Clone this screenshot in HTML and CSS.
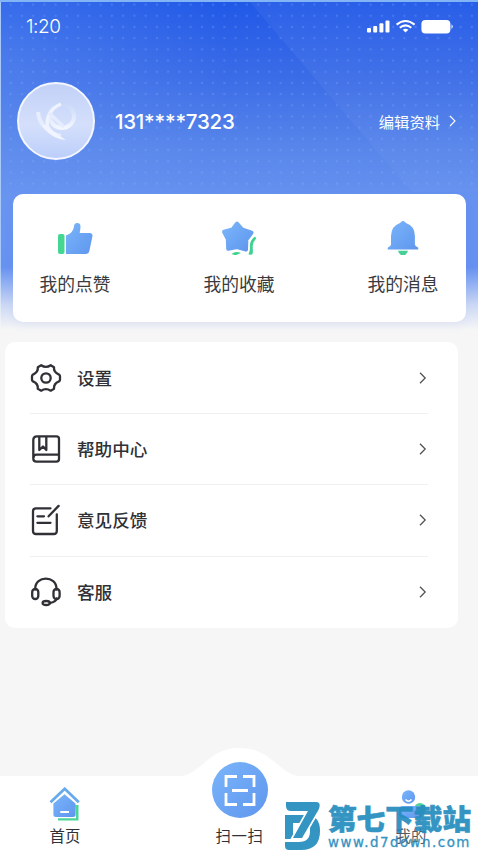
FILE: index.html
```html
<!DOCTYPE html>
<html lang="zh-CN">
<head>
<meta charset="utf-8">
<title>我的</title>
<link rel="stylesheet" href="styles.css">
</head>
<body>
<svg class="defs" width="0" height="0">
  <defs>
    <linearGradient id="blue" x1="0" y1="0" x2="1" y2="1"><stop offset="0" stop-color="#7ab5fa"/><stop offset="1" stop-color="#5f96ee"/></linearGradient>
    <linearGradient id="petal" x1="0" y1="0" x2="0" y2="1"><stop offset="0" stop-color="#cbd9f9"/><stop offset="1" stop-color="#f2f6ff"/></linearGradient>
  </defs>
</svg>
<div class="app">
  <header class="hero">
    <div class="beam"></div>
    <div class="dots"></div>
    <div class="status">
      <span class="time">1:20</span>
      <svg width="88" height="16" viewBox="0 0 88 16" fill="#fff">
        <rect x="0" y="9" width="4" height="4.5" rx="1"/><rect x="6.2" y="7" width="4" height="6.5" rx="1"/><rect x="12.4" y="4.3" width="4" height="9.2" rx="1"/><rect x="18.5" y="1.5" width="4" height="12" rx="1"/>
        <g fill="none" stroke="#fff" stroke-width="2"><path d="M29.6 5.6Q38.5-1.6 47.6 5.6"/><path d="M32.8 8.7Q38.5 4 44.3 8.7"/></g>
        <path d="M35.7 10.7Q38.5 8.6 41.4 10.7L38.5 13.5Z"/>
        <rect x="54.4" y="1" width="29" height="13.6" rx="4"/><path d="M84.5 5.2Q87 7.5 84.5 10Z"/>
      </svg>
    </div>
    <div class="profile">
      <div class="avatar">
        <svg width="42" height="46" viewBox="0 0 42 46" fill="none">
          <path d="M3 14C4 25 12 35 26 38" stroke="#e6edfd" stroke-width="4"/>
          <path d="M7 27C13 36 20 41 31 42C25 38 18 34 14 28Z" fill="#f1f5ff"/>
          <circle cx="27" cy="18" r="12" stroke="url(#petal)" stroke-width="4"/>
          <path d="M13 31C10 19 16 10 26 6" stroke="#eef3ff" stroke-width="3.5"/>
          <path d="M14 15L29 29" stroke="#e5ecfd" stroke-width="3.5"/>
        </svg>
      </div>
      <span class="phone">131****7323</span>
      <a class="edit">编辑资料<svg width="8" height="12" viewBox="0 0 8 12" fill="none" stroke="#fff" stroke-width="1.1"><path d="M1 1L6 6L1 11"/></svg></a>
    </div>
  </header>

  <section class="stats">
    <div class="stat">
      <svg width="36" height="36" viewBox="0 0 36 36"><rect x="1" y="15" width="6.5" height="20" rx="2" fill="#45d692"/><path d="M9 35V16.5C14 15 16.5 11.5 17 7C17.3 4.9 18.6 4 20 4C23 4 24 6 23.3 10L22.7 14H32.5Q36 14.2 35.4 17.5L32.4 31.7Q31.7 35 28.4 35Z" fill="url(#blue)"/></svg>
      <span>我的点赞</span>
    </div>
    <div class="stat">
      <svg width="36" height="36" viewBox="0 0 36 36"><path d="M33.5 17.7Q36 18 34.4 20.7Q31.5 23.2 31.700 27L31.9 33.5Q31.7 37 27.5 35.2Q29.5 31 28.8 27Q29 21.3 33.5 17.7ZM10.500 35Q14.5 31.6 20 34L14.5 36.3Z" fill="#3fd18e"/><path d="M16 4.500L11.6 10.4L3 12.800L6.800 20L7.200 29.800L16 28L25 30.500L25.400 20.500L30.500 13.700L21 10.400Z" fill="url(#blue)" stroke="url(#blue)" stroke-width="4" stroke-linejoin="round"/></svg>
      <span>我的收藏</span>
    </div>
    <div class="stat">
      <svg width="36" height="36" viewBox="0 0 36 36"><path d="M13 31.7H23Q21.7 36.5 18 36.5T13 31.7Z" fill="#48cf95"/><path d="M15 4Q18 0 21 4Q29.8 7 29.9 17V25.5Q30.5 27.6 32.4 28Q33.5 28.4 33.3 30.5H2.7Q2.4 28.4 3.7 28Q5.8 27.4 6 25.5V17Q6.2 7 15 4Z" fill="url(#blue)"/></svg>
      <span>我的消息</span>
    </div>
  </section>

  <section class="menu">
    <div class="row">
      <svg class="ico" width="32" height="32" viewBox="0 0 32 32"><path d="M11.2 3.2Q15.9 6.6 20.7 3.2L24 5.2Q23.4 10.4 29 12.6Q30 13.2 30 14.3V17.7Q30 18.8 29 19.4Q23.6 21.4 24 26.8L20.7 28.7Q15.9 25.4 11.2 28.7L7.8 26.8Q8.3 21.4 3 19.4Q2 18.8 2 17.7V14.3Q2 13.2 3 12.6Q8.4 10.4 7.8 5.2Z"/><circle cx="16" cy="16" r="4.7"/></svg>
      <span class="label">设置</span><svg class="chev" width="8" height="12" viewBox="0 0 8 12"><path d="M1 .8L6.2 6L1 11.2"/></svg>
    </div>
    <div class="row">
      <svg class="ico" width="32" height="32" viewBox="0 0 32 32"><path d="M7 3.4H26.5Q29 3.4 29 5.9V26Q29 28.6 26.5 28.6H6.5Q3.3 28.6 3.3 25.4V7.1Q3.3 3.4 7 3.4ZM3.5 24.7Q3.5 21.7 6.5 21.7H29M9.3 3.5V17L13 13.5L16.3 17V3.5"/></svg>
      <span class="label">帮助中心</span><svg class="chev" width="8" height="12" viewBox="0 0 8 12"><path d="M1 .8L6.2 6L1 11.2"/></svg>
    </div>
    <div class="row">
      <svg class="ico" width="32" height="32" viewBox="0 0 32 32"><path d="M20.5 4.3H6Q3 4.3 3 7.3V27Q3 30 6 30H23.8Q26.8 30 26.8 27V10.5M28.6 1.9L18.6 12.3M7.4 12.3H14M7.4 18.8H20.5"/></svg>
      <span class="label">意见反馈</span><svg class="chev" width="8" height="12" viewBox="0 0 8 12"><path d="M1 .8L6.2 6L1 11.2"/></svg>
    </div>
    <div class="row">
      <svg class="ico" width="32" height="32" viewBox="0 0 32 32"><path d="M5.2 13.5V12.8C5.2-.9 26.5-.9 26.5 12.8V13.5M26.8 22.5C26 25 22.8 26.5 19.8 27"/><rect x="2.2" y="13" width="6.1" height="10" rx="3"/><rect x="23.5" y="13" width="6.1" height="10" rx="3"/><ellipse cx="16.2" cy="27" rx="3.6" ry="2"/></svg>
      <span class="label">客服</span><svg class="chev" width="8" height="12" viewBox="0 0 8 12"><path d="M1 .8L6.2 6L1 11.2"/></svg>
    </div>
  </section>

  <nav class="tabs">
    <svg class="hump" width="130" height="30" viewBox="0 0 130 30"><path d="M0 30C28 29 31 1 65 1S102 29 130 30Z" fill="#fff"/></svg>
    <div class="tab">
      <svg width="32" height="34" viewBox="0 0 32 34"><path d="M26.2 18H29.5V33.5H9V31.3H27Z" fill="#4dd49a"/><path d="M1.5 15.2L15.7 1.8L29.8 15.2" fill="none" stroke="#67a9ed" stroke-width="2.8"/><path d="M4.4 29.5V16.5L15.5 7.2L26.5 16.5V27.5Q26.5 30 24 30H7Q4.4 30 4.4 27.5Z" fill="url(#blue)"/><path d="M11.3 25H20" stroke="#fff" stroke-width="2"/></svg>
      <span>首页</span>
    </div>
    <div class="tab scan">
      <svg width="56" height="56" viewBox="0 0 56 56"><circle cx="28" cy="28" r="28" fill="url(#blue)"/><path d="M14 25V14.5H25M31 14.5H42V25M42 31V42.5H31M25 42.5H14V31M20 28.5H36" fill="none" stroke="#fff" stroke-width="2.8"/></svg>
      <span>扫一扫</span>
    </div>
    <div class="tab mine">
      <svg width="32" height="34" viewBox="0 0 32 34"><circle cx="13.5" cy="10" r="6.7" fill="url(#blue)"/><path d="M10.500 12.5Q13.5 16 16.5 12.5" fill="none" stroke="#fff" stroke-width="1.5"/><circle cx="25" cy="22" r="6" fill="#4dd49a"/><rect x="4" y="19" width="23" height="12" rx="4" fill="url(#blue)"/></svg>
      <span>我的</span>
    </div>
  </nav>

  <div class="watermark">
    <svg width="36" height="48" viewBox="0 0 36 48" fill="#258cbe"><path fill-rule="evenodd" d="M0 13H24Q35 15 35 29Q35 48 16 48H4Q0 48 0 44V40H14Q25 40 25 29Q25 21 19 21H8V37H0Z"/><path d="M2 0H31Q35.500 0 34.500 5Q34 8 31 12L17 36H8L23 9H6Q2 9 2 5Z" stroke="#fff" stroke-width="3.5"/><path d="M1 0H31Q35.500 0 34.500 5Q34 8 31 12L17 36H8L23 9H6Q1 9 1 4Z"/></svg>
    <div class="wm-text"><b>第七下载站</b><span>www.d7down.com</span></div>
  </div>
</div>
</body>
</html>
```
FILE: styles.css
```css
* { box-sizing: border-box; }
body { margin: 0; background: #f6f6f6; font-family: "Noto Sans CJK SC", sans-serif; }
.defs { position: absolute; }
.app { position: relative; width: 478px; height: 850px; overflow: hidden; display: flex; flex-direction: column; }
svg { display: block; flex: none; }

.hero {
  position: relative; height: 332px; flex: none; color: #fff;
  border-top: 2px solid #83b4f5;
  background:
    linear-gradient(180deg, rgba(246,246,246,0) 265px, rgba(246,246,246,.7) 303px, #f6f6f6 328px),
    linear-gradient(90deg, #a9c9f8 1px, transparent 1px),
    radial-gradient(ellipse 230px 260px at 0 60px, rgba(120,165,245,.32), rgba(120,165,245,0)),
    linear-gradient(180deg, #2058e7 0, #3b6ce7 75px, #5785ea 145px, #6692f0 195px, #6690f2 300px);
}
.beam {
  position: absolute; inset: 0 0 140px 0;
  background: linear-gradient(135deg, rgba(255,255,255,.07), rgba(255,255,255,.02));
  clip-path: polygon(250px 0, 100% 0, 100% 100%, 412px 100%);
}
.dots {
  position: absolute; inset: 0 0 138px 1px;
  background: radial-gradient(circle, rgba(150,185,255,.24) 0 .8px, transparent 1.6px) 4px -3px / 11.25px 11.2px;
}
.status { position: relative; height: 50px; padding: 0 23px 0 26px; display: flex; justify-content: space-between; align-items: center; }
.time { font: 300 19px/24px Inter, sans-serif; letter-spacing: -.4px; }
.profile { position: relative; height: 78px; margin: 30px 21px 0 17px; display: flex; align-items: center; }
.avatar { width: 78px; height: 78px; border: 2px solid #f3f6ff; border-radius: 50%; background: linear-gradient(#c2d1f7, #d4dffb 55%, #bccffa); display: flex; align-items: center; justify-content: center; }
.phone { margin: 2px 0 0 20px; font: 500 20.5px/28px Inter, sans-serif; letter-spacing: -.25px; }
.edit { margin-left: auto; display: flex; align-items: center; gap: 9px; font-size: 15.3px; line-height: 22px; }

.stats { position: relative; flex: none; width: 453px; height: 128px; margin: -138px 0 0 12.5px; padding: 25px 0 0; background: #fff; border-radius: 10px; display: flex; justify-content: space-between; box-shadow: 0 4px 10px rgba(100,120,180,.06); }
.stat { width: 125px; display: flex; flex-direction: column; align-items: center; font-size: 17.8px; line-height: 26px; color: #3a3a3d; gap: 15px; }

.menu { flex: none; width: 453px; height: 286px; margin: 20px 0 0 5px; background: #fff; border-radius: 10px; padding: 0 30px 0 25px; }
.row { height: 71.5px; display: flex; align-items: center; border-bottom: 1px solid #f0f0f0; }
.row:last-child { border-bottom: 0; }
.row:first-child { padding-top: 1px; }
.ico { fill: none; stroke: #303136; stroke-width: 2.3; stroke-linecap: round; stroke-linejoin: round; }
.label { margin-left: 15px; font-size: 17.6px; font-weight: 500; line-height: 26px; color: #303136; }
.chev { margin: 0 1px 0 auto; fill: none; stroke: #505154; stroke-width: 1.25; }

.tabs { position: relative; flex: none; height: 74px; margin-top: auto; background: #fff; display: flex; justify-content: space-between; }
.hump { position: absolute; left: 175px; top: -29px; }
.tab { position: relative; width: 130px; padding-top: 11px; display: flex; flex-direction: column; align-items: center; font-size: 15.4px; line-height: 24px; color: #303136; gap: 2px; }
.scan { width: 90px; margin: -14px 0 0 5px; padding-top: 0; letter-spacing: .6px; gap: 5px; }
.mine { width: 134px; }
.mine span { opacity: .8; }

.watermark { position: absolute; left: 285px; top: 802px; display: flex; gap: 7px; color: #258cbe; opacity: .93; }
.wm-text { width: 144px; display: flex; flex-direction: column; white-space: nowrap; }
.wm-text b { font-size: 28.6px; font-weight: 900; line-height: 32px; -webkit-text-stroke: .6px #258cbe; }
.wm-text span { margin-top: 1px; font: 400 13.4px/16px "DejaVu Sans", sans-serif; letter-spacing: 1.5px; -webkit-text-stroke: .3px #258cbe; }
```
